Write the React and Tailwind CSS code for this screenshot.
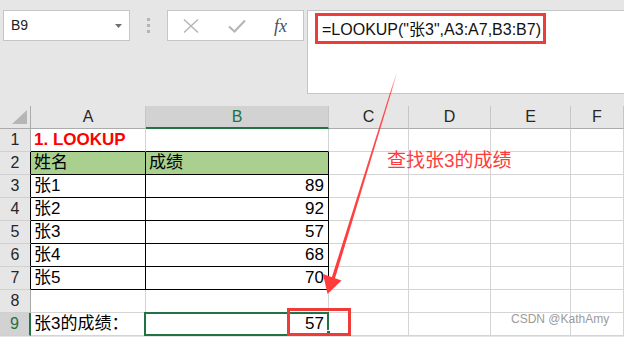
const FONT = { fontFamily: '"Liberation Sans", "Noto Sans CJK SC", sans-serif' };

const cols = ["A", "B", "C", "D", "E", "F"];

const rows = [
  { n: 1, a: "1. LOOKUP", b: "" },
  { n: 2, a: "姓名", b: "成绩" },
  { n: 3, a: "张1", b: "89" },
  { n: 4, a: "张2", b: "92" },
  { n: 5, a: "张3", b: "57" },
  { n: 6, a: "张4", b: "68" },
  { n: 7, a: "张5", b: "70" },
  { n: 8, a: "", b: "" },
  { n: 9, a: "张3的成绩：", b: "57" },
];

const GRID = "grid h-[23px] grid-cols-[31px_115px_183px_80px_82px_80px_1fr] grid-rows-[23px] leading-[20px]";

// side colours for the grid lines, written out in full
const R_BLACK = "border-r-[#000]";
const R_GRID = "border-r-[#d4d4d4]";
const B_BLACK = "border-b-[#000]";
const B_GRID = "border-b-[#d4d4d4]";

function Toolbar() {
  return (
    <div className="flex h-[106px] pt-[10px]">
      <div className="ml-[3px] flex h-[31px] w-[127px] items-center justify-between border border-[#c6c6c6] bg-white pl-[7px] pr-[7px]">
        <span className="text-[14px] text-[#222]">B9</span>
        <svg width="7" height="4" viewBox="0 0 7 4">
          <path d="M0 0h7L3.5 4z" fill="#707070" />
        </svg>
      </div>
      <div className="flex h-[31px] w-[37px] flex-col items-center justify-center gap-[3px] pb-[1px]">
        <div className="h-[3px] w-[3px] bg-[#b4b4b4]" />
        <div className="h-[3px] w-[3px] bg-[#b4b4b4]" />
        <div className="h-[3px] w-[3px] bg-[#b4b4b4]" />
      </div>
      <div className="flex h-[31px] w-[137px] items-center border border-[#c6c6c6] bg-white">
        <svg width="18" height="16" viewBox="0 0 18 16" className="ml-[14px]">
          <path d="M2 1.5l14 13M16 1.5l-14 13" stroke="#b4b4b4" strokeWidth="1.4" fill="none" />
        </svg>
        <svg width="18" height="14" viewBox="0 0 18 14" className="ml-[28px]">
          <path d="M1 7.5l5.5 5L17 1.5" stroke="#b4b4b4" strokeWidth="2" fill="none" />
        </svg>
        <span
          className="ml-[28px] text-[18px] italic leading-none text-[#505050]"
          style={{ fontFamily: '"Liberation Serif", serif' }}
        >
          fx
        </span>
      </div>
      <div className="ml-[3px] h-[84px] flex-1 border border-r-0 border-[#c6c6c6] bg-white pl-[14px] pt-[7px]">
        <span className="text-[16px] leading-none text-[#111]">=LOOKUP("张3",A3:A7,B3:B7)</span>
      </div>
    </div>
  );
}

function HeaderRow() {
  return (
    <div className={GRID}>
      <div className="relative border-r border-b border-r-[#ababab] border-b-[#ababab] bg-[#e6e6e6]">
        <svg width="15" height="14" viewBox="0 0 15 14" className="absolute right-[3px] bottom-[4px]">
          <path d="M15 0v14H0z" fill="#b6b6b6" />
        </svg>
      </div>
      {cols.map((c) =>
        c === "B" ? (
          <div
            key={c}
            className="flex items-center justify-center border-r border-b-2 border-r-[#c6c6c6] border-b-[#217346] bg-[#d2d2d2] text-[16px] text-[#217346]"
          >
            {c}
          </div>
        ) : (
          <div
            key={c}
            className="flex items-center justify-center border-r border-b border-r-[#c6c6c6] border-b-[#ababab] bg-[#e6e6e6] text-[16px] text-[#262626]"
          >
            {c}
          </div>
        )
      )}
    </div>
  );
}

function Row({ r }) {
  const inTable = r.n >= 2 && r.n <= 7;
  const sel = r.n === 9;
  const right = inTable ? R_BLACK : R_GRID;
  const bottom = inTable || r.n === 1 ? B_BLACK : B_GRID;
  const fill = r.n === 2 ? "bg-[#a9d08e]" : "bg-white";
  return (
    <div className={GRID}>
      {sel ? (
        <div className="flex items-center justify-center border-r-2 border-b border-r-[#217346] border-b-[#d0d0d0] bg-[#d2d2d2] text-[16px] text-[#217346]">
          {r.n}
        </div>
      ) : (
        <div
          className={`flex items-center justify-center border-r border-b border-b-[#d0d0d0] bg-[#e6e6e6] text-[16px] text-[#262626] ${
            inTable ? R_BLACK : "border-r-[#ababab]"
          }`}
        >
          {r.n}
        </div>
      )}
      <div
        className={`flex items-center overflow-visible whitespace-nowrap border-r border-b pl-[3px] ${right} ${bottom} ${fill} ${
          r.n === 1 ? "text-[17px] font-bold text-[#ff0000]" : "text-[17px] text-black"
        }`}
      >
        {r.a}
      </div>
      <div
        className={`relative flex items-center border-r border-b text-[17px] text-black ${right} ${bottom} ${fill} ${
          r.n === 2 ? "justify-start pl-[3px]" : "justify-end pr-[4px]"
        }`}
      >
        {r.b}
        {sel && (
          <>
            <div className="absolute -top-[1px] -right-[1px] -bottom-[1px] -left-[2px] border-2 border-[#217346]" />
            <div className="absolute -right-[3px] bottom-0 h-[5px] w-[5px] border border-white bg-[#217346]" />
          </>
        )}
      </div>
      {[0, 1, 2, 3].map((i) => (
        <div key={i} className="border-r border-b border-r-[#d4d4d4] border-b-[#d4d4d4] bg-white" />
      ))}
    </div>
  );
}

function Overlays() {
  return (
    <>
      <div className="absolute left-[315px] top-[13px] h-[31px] w-[231px] border-[3px] border-[#f03b3b]" />
      <div className="absolute left-[287px] top-[308px] h-[28px] w-[64px] border-[3px] border-[#f03b3b]" />
      <svg className="pointer-events-none absolute top-0 left-0" width="624" height="337" viewBox="0 0 624 337">
        <defs>
          <linearGradient id="fade" x1="397" y1="72" x2="340" y2="260" gradientUnits="userSpaceOnUse">
            <stop offset="0" stopColor="#ff3b3b" stopOpacity="0" />
            <stop offset="0.12" stopColor="#ff3b3b" stopOpacity="0.9" />
            <stop offset="1" stopColor="#ff3b3b" stopOpacity="1" />
          </linearGradient>
        </defs>
        <path d="M396.6 72L397.4 72.2L334.8 279L331.6 278z" fill="url(#fade)" />
        <path d="M323 274L341.5 280.5L327.5 294z" fill="#ff3b3b" />
      </svg>
      <div className="absolute top-[151px] left-[387px] text-[19px] leading-none text-[#ff3b3b]">
        查找张3的成绩
      </div>
      <div className="absolute top-[313px] left-[511px] text-[12px] leading-none text-[#9b9b9b]">
        CSDN @KathAmy
      </div>
    </>
  );
}

export default function App() {
  return (
    <div className="relative h-[337px] w-[624px] overflow-hidden bg-[#e6e6e6]" style={FONT}>
      <Toolbar />
      <HeaderRow />
      {rows.map((r) => (
        <Row key={r.n} r={r} />
      ))}
      <Overlays />
    </div>
  );
}
